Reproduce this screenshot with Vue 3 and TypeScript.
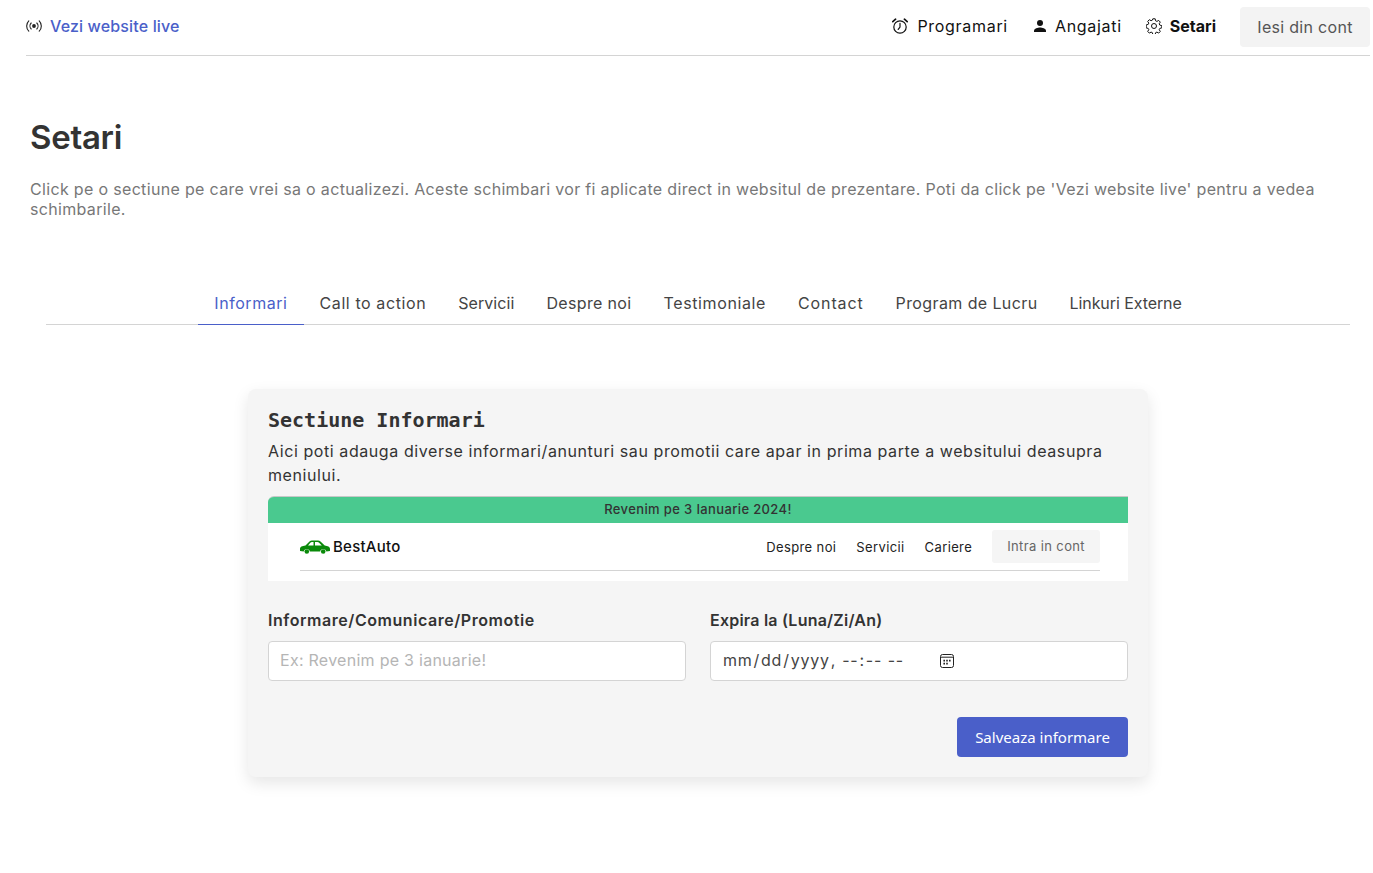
<template>
  <div class="page">
    <header class="topbar">
      <a class="live-link">
        <svg class="live-icon" viewBox="0 0 16 16" width="16" height="16" fill="none" stroke="#222" stroke-width="1.1" stroke-linecap="round">
          <circle cx="8" cy="8" r="1.9" fill="#222" stroke="none" />
          <path d="M5.200 5a4.300 4.300 0 0 0 0 6M10.800 5a4.300 4.300 0 0 1 0 6" />
          <path d="M2.800 2.800a7.400 7.400 0 0 0 0 10.400M13.200 2.800a7.400 7.400 0 0 1 0 10.400" />
        </svg>
        <span>Vezi website live</span>
      </a>
      <nav class="menu">
        <a class="menu-item">
          <svg viewBox="0 0 16 16" width="16" height="16" fill="none" stroke="#111" stroke-width="1.200" stroke-linecap="round">
            <circle cx="8" cy="9" r="6.200" />
            <path d="M8 5.400V9l-1.800 2.400" />
            <path d="M.8 3.600 3.600 1.200M15.200 3.600l-2.800-2.400" stroke-width="1.700" />
          </svg>
          <span>Programari</span>
        </a>
        <a class="menu-item">
          <svg viewBox="0 0 16 16" width="16" height="16" fill="#111">
            <circle cx="8" cy="5" r="3" />
            <path d="M2 14v-1.400C2 10.400 6 9.400 8 9.400s6 1 6 3.200V14z" />
          </svg>
          <span>Angajati</span>
        </a>
        <a class="menu-item active">
          <svg viewBox="0 0 16 16" width="16" height="16" fill="none" stroke="#111" stroke-width="1" stroke-linejoin="round">
            <circle cx="8" cy="8" r="2.500" />
            <path d="M6.800.8h2.400l.4 2 1.300.6 1.800-1 1.600 1.700-1.100 1.700.6 1.300 2 .5v2.300l-2 .5-.6 1.300 1.100 1.700-1.600 1.700-1.800-1-1.300.6-.4 2H6.800l-.4-2-1.300-.6-1.800 1-1.600-1.700 1.100-1.700-.6-1.300-2-.5V6.900l2-.5.600-1.300-1.100-1.700 1.600-1.700 1.800 1 1.300-.6z" />
          </svg>
          <span>Setari</span>
        </a>
        <button class="logout" type="button">Iesi din cont</button>
      </nav>
    </header>

    <section class="intro">
      <h1>Setari</h1>
      <p>Click pe o sectiune pe care vrei sa o actualizezi. Aceste schimbari vor fi aplicate direct in websitul de prezentare. Poti da click pe 'Vezi website live' pentru a vedea schimbarile.</p>
    </section>

    <div class="tabs">
      <a
        v-for="tab in tabs"
        :key="tab.label"
        class="tab"
        :class="{ selected: tab.label === activeTab }"
        :style="{ letterSpacing: tab.tracking + 'px' }"
      >{{ tab.label }}</a>
    </div>

    <section class="card">
      <h2>Sectiune Informari</h2>
      <p class="card-text">Aici poti adauga diverse informari/anunturi sau promotii care apar in prima parte a websitului deasupra meniului.</p>

      <div class="preview">
        <div class="preview-banner">Revenim pe 3 Ianuarie 2024!</div>
        <div class="preview-body">
          <div class="preview-nav">
            <div class="preview-logo">
              <svg viewBox="0 0 30 14" width="30" height="14" fill="#0a8a0a">
                <path d="M0 8.500C0 6.800 2 6 5.500 5.500L9.500 1.500C10.200.8 11 .5 12 .5h6c1 0 1.800.4 2.500 1l4.200 3.900c3 .4 5.300 1.200 5.300 3.300V11l-3.600.6a3.200 3.200 0 0 0-6.300 0H10a3.200 3.200 0 0 0-6.300 0L0 11z" />
                <path d="M8 5.400h5.500V2H12c-.7 0-1.200.2-1.700.7zM15 2v3.400h6.800l-2.700-2.700c-.5-.4-1-.7-1.700-.7z" fill="#fff" />
                <circle cx="6.800" cy="11.500" r="2.300" />
                <circle cx="23.200" cy="11.500" r="2.300" />
              </svg>
              <span>BestAuto</span>
            </div>
            <div class="preview-links">
              <span>Despre noi</span>
              <span>Servicii</span>
              <span>Cariere</span>
              <span class="preview-login">Intra in cont</span>
            </div>
          </div>
        </div>
      </div>

      <div class="fields">
        <label class="field">
          <span class="field-label">Informare/Comunicare/Promotie</span>
          <input v-model="message" type="text" placeholder="Ex: Revenim pe 3 ianuarie!" />
        </label>
        <label class="field">
          <span class="field-label date-label">Expira la (Luna/Zi/An)</span>
          <span class="date-wrap">
            <input v-model="expires" class="date-input" type="datetime-local" />
            <svg class="date-icon" viewBox="0 0 14 14" width="14" height="14" fill="none" stroke="#222" stroke-width="1">
              <rect x=".5" y=".5" width="13" height="13" rx="2" />
              <path d="M1 3.200h12" />
              <path d="M3.400 5.800h1.600v1.600H3.400zM6.200 5.800h1.600v1.600H6.200zM9 5.800h1.600v1.600H9zM3.400 8.800h1.600v1.600H3.400zM6.200 8.800h1.600v1.600H6.200z" fill="#222" stroke="none" />
            </svg>
          </span>
        </label>
      </div>

      <div class="actions">
        <button class="save" type="button">Salveaza informare</button>
      </div>
    </section>
  </div>
</template>

<script setup lang="ts">
import { ref } from 'vue'

const tabs = [
  { label: 'Informari', tracking: 0.56 },
  { label: 'Call to action', tracking: 0.59 },
  { label: 'Servicii', tracking: 0.07 },
  { label: 'Despre noi', tracking: 0.35 },
  { label: 'Testimoniale', tracking: 0.62 },
  { label: 'Contact', tracking: 0.88 },
  { label: 'Program de Lucru', tracking: 0.39 },
  { label: 'Linkuri Externe', tracking: -0.08 }
]
const activeTab = ref('Informari')
const message = ref('')
const expires = ref('')
</script>

<style>
html,
body {
  background: #fff;
  overflow-x: hidden;
}
</style>

<style scoped>
.page {
  font-family: Inter, 'Open Sans', sans-serif;
  font-size: 16px;
  color: #333;
  padding-bottom: 96px;
}

.topbar {
  display: flex;
  align-items: center;
  justify-content: space-between;
  height: 54px;
  padding-bottom: 1px;
  margin: 0 3px 0 26px;
  border-bottom: 1px solid #d4d4d4;
}

.live-link {
  display: flex;
  align-items: center;
  gap: 8px;
  margin-bottom: 2px;
  color: #4a5fc9;
  font-weight: 500;
  letter-spacing: 0.15px;
}

.menu {
  display: flex;
  align-items: center;
}

.menu-item {
  display: flex;
  align-items: center;
  gap: 9px;
  margin-right: 24px;
  margin-bottom: 2px;
  color: #111;
  letter-spacing: 0.7px;
}

.menu-item:nth-child(2) {
  gap: 7px;
}

.menu-item.active {
  gap: 8px;
  font-weight: 700;
  letter-spacing: 0;
}

.logout {
  width: 130px;
  height: 40px;
  border: 0;
  border-radius: 4px;
  background: #f3f3f3;
  color: #555;
  font: inherit;
  letter-spacing: 0.3px;
}

.intro {
  padding: 61px 45px 0 30px;
}

.intro h1 {
  margin: 0;
  font-size: 33px;
  line-height: 40px;
  font-weight: 600;
  letter-spacing: -0.3px;
}

.intro p {
  margin: 22px 0 0;
  line-height: 20px;
  color: #777;
  letter-spacing: 0.33px;
}

.tabs {
  display: flex;
  justify-content: center;
  margin: 65px 23px 0 46px;
  border-bottom: 1px solid #d4d4d4;
}

.tab {
  height: 40px;
  line-height: 38px;
  padding: 0 16px;
  color: #444;
  box-sizing: border-box;
}

.tab.selected {
  color: #4a5fc9;
  border-bottom: 1px solid #4a5fc9;
  height: 41px;
  margin-bottom: -1px;
}

.card {
  box-sizing: border-box;
  width: 900px;
  margin: 64px 0 0 248px;
  padding: 20px;
  height: 388px;
  background: #f5f5f5;
  border-radius: 8px;
  box-shadow: 0 6px 16px rgba(0, 0, 0, 0.1);
}

.card h2 {
  margin: 0 0 8px;
  font-family: 'DejaVu Sans Mono', monospace;
  font-size: 20px;
  line-height: 22px;
  font-weight: 700;
}

.card-text {
  margin: 0 0 9px;
  line-height: 24px;
  color: #333;
  letter-spacing: 0.58px;
}

.preview {
  border-top: 1px solid #c8c8c8;
  border-top-left-radius: 6px;
  overflow: hidden;
}

.preview-banner {
  height: 26px;
  line-height: 25px;
  background: #4ac98f;
  color: #333;
  text-align: center;
  font-size: 13px;
  font-weight: 500;
  letter-spacing: 0.37px;
}

.preview-body {
  height: 58px;
  padding: 0 28px 10px 32px;
  box-sizing: border-box;
  background: #fff;
}

.preview-nav {
  display: flex;
  align-items: center;
  justify-content: space-between;
  height: 47px;
  border-bottom: 1px solid #d4d4d4;
}

.preview-logo {
  display: flex;
  align-items: center;
  gap: 3px;
  font-size: 15px;
  font-weight: 500;
  color: #111;
  letter-spacing: 0.25px;
}

.preview-links {
  display: flex;
  align-items: center;
  gap: 20px;
  font-size: 13px;
  color: #222;
  letter-spacing: 0.38px;
}

.preview-login {
  padding: 0 15px;
  height: 33px;
  line-height: 32px;
  background: #f5f5f5;
  color: #666;
  border-radius: 3px;
}

.fields {
  display: grid;
  grid-template-columns: 1fr 1fr;
  gap: 24px;
  margin-top: 28px;
}

.field {
  display: flex;
  flex-direction: column;
}

.field-label {
  font-weight: 600;
  line-height: 22px;
  margin-bottom: 10px;
  letter-spacing: 0.55px;
}

.date-label {
  letter-spacing: 0.22px;
}

.field input {
  box-sizing: border-box;
  display: block;
  height: 40px;
  width: 100%;
  padding: 0 11px 2px;
  border: 1px solid #d4d4d4;
  border-radius: 4px;
  background: #fff;
  color: #444;
  font: inherit;
  letter-spacing: 0.27px;
  outline: none;
}

.field input::placeholder {
  color: #b5b5b5;
}

.date-wrap {
  position: relative;
  display: block;
}

.field .date-input {
  padding-left: 11px;
  letter-spacing: 0.75px;
}

.date-input::-webkit-calendar-picker-indicator {
  opacity: 0;
}

.date-icon {
  position: absolute;
  left: 230px;
  top: 13px;
  pointer-events: none;
}

.actions {
  display: flex;
  justify-content: flex-end;
  margin-top: 36px;
}

.save {
  width: 171px;
  height: 40px;
  border: 0;
  border-radius: 4px;
  background: #4a5fc9;
  color: #fff;
  font-family: 'Noto Sans', sans-serif;
  font-size: 15px;
}
</style>
